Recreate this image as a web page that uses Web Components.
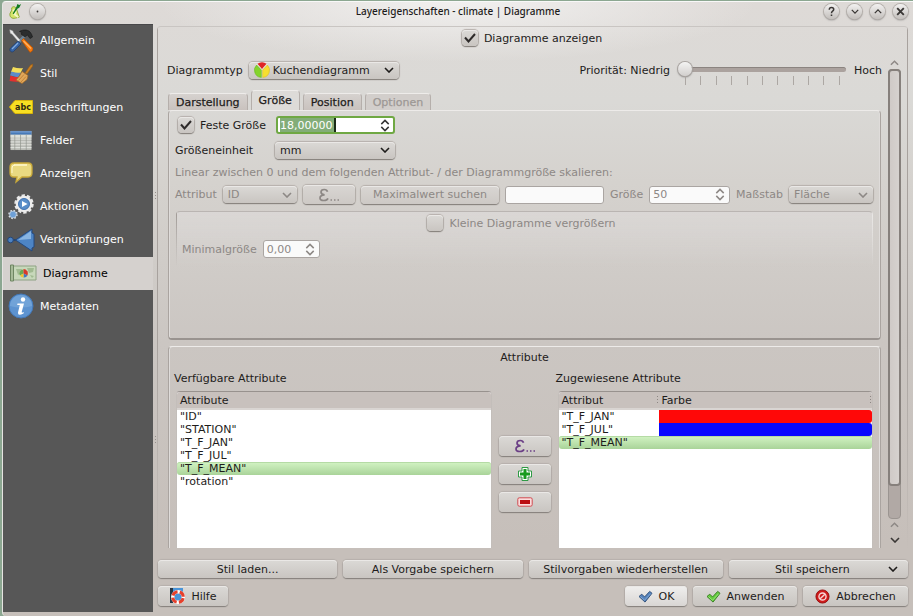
<!DOCTYPE html>
<html lang="de">
<head>
<meta charset="utf-8">
<title>Layereigenschaften - climate | Diagramme</title>
<style>
html, body { height: 100%; }
body {
  margin: 0;
  background: #8ca791;
  color: #1e1c1b;
  font: 11px/13px "DejaVu Sans", sans-serif;
  --dim: #8d8885;
}
</style>
</head>
<body>
<layer-dialog></layer-dialog>

<script>
const ICONS = {
  qgis: ['0 0 16 18', '<path d="M4 5c2-2 4-1 5 1l3 9-4 1c-4 1-6-1-6-4 0-2 2-3 2-5z" fill="#d5e56b" stroke="#8aa52f"/><path d="M5 8c3-1 4 1 2 4l4 3" fill="none" stroke="#f4f7c3" stroke-width="2"/><path d="M5 11L9 4l1-3 2 1 2-1-2 4-2 1-4 6z" fill="#137a22"/>'],
  tools: ['0 0 24 24', '<path d="M8 12.500L15.500 5l2 2-7.500 8z" fill="#6f8496"/><path d="M.8.800l3 1.200.6 1.800 6.600 7.200-1.500 1.500-6.500-7.500-1.600-.8z" fill="#ececec" stroke="#bbb" stroke-width=".5"/><path d="M10.500 2.500c3.500-2 8-2.200 10.500.5 1.500 1.500 2 3.500 2.500 5l-2.500 1.500-2.500-3.500-2.500 2-4-3 1-1.500z" fill="#2b2d2e" stroke="#151515" stroke-width=".6"/><path d="M12.500 11.500l2-2L24 19q.5 3-3 4.500z" fill="#f57a11" stroke="#b14f00" stroke-width=".7"/><path d="M14.500 12l7.500 7.500" stroke="#ffb164" stroke-width="1.200"/><path d="M9 12l3 3-7.500 7.500c-2 1.500-5-1-3-3.500z" fill="#3563a5" stroke="#1f3c6b" stroke-width=".7"/><path d="M9 14l-6 6" stroke="#84abdd" stroke-width="1.200"/>'],
  brush: ['0 0 24 24', '<path d="M4 5q6 2 10 1l-3 6-9-2z" fill="#f4de5a"/><path d="M2.500 9.500q5 2 9.500 1l-3 5-8-2z" fill="#5c8cc9"/><path d="M1.500 13.500q4 2 8 1.500l4 4q-6 1.500-13 0z" fill="#e3302f"/><path d="M16 11l5.500-8 2.500-1-.5 2.500L18 12z" fill="#c67e23" stroke="#935610" stroke-width=".5"/><path d="M13 9.500l6 4-1 4-5 4-6-3.500q4-4 6-8.500z" fill="#e0a75a" stroke="#a66a24" stroke-width=".7"/><path d="M9.500 18.500l5.500-6M12 20l5-5.500" stroke="#b9792f" stroke-width=".8"/>'],
  abc: ['0 0 24 14', '<path d="M.5 7L5 1.500l1-1h17.500v13H6l-1-1z" fill="#f7df22" stroke="#d9b40c"/><text x="14" y="10" text-anchor="middle" font-family="DejaVu Sans" font-weight="bold" font-size="8" fill="#2d2a12">abc</text>'],
  table: ['0 0 24 22', '<path d="M1 1h22v20H1z" fill="#b9bbb5"/><path d="M1 1h22v4H1z" fill="#477ab8"/><path d="M1 2h22" stroke="#86abd8"/><path d="M1 5h22v3H1z" fill="#dde0da"/><path d="M1 9.500h22M1 12.500h22M1 15.500h22M1 18.500h22" stroke="#e7e9e4"/><path d="M5.500 5v16M11.500 5v16M17.500 5v16" stroke="#8f938c" stroke-width=".7"/>'],
  bubble: ['0 0 24 24', '<path d="M5 2h14q4 0 4 4v6q0 4-4 4h-6l-6 5 1-5H5q-4 0-4-4V6q0-4 4-4z" fill="#e9d981" stroke="#c9a93a" stroke-width="1.300"/><path d="M5 4h13" stroke="#fff8cf" stroke-width="1.500"/><path d="M3 12V7q0-3 3-3" fill="none" stroke="#fff8cf"/>'],
  gears: ['0 0 26 26', '<circle cx="16" cy="10" r="8.200" fill="none" stroke="#e8e8e8" stroke-width="3" stroke-dasharray="3.200 1.952"/><circle cx="16" cy="10" r="7" fill="#6d9ed4" stroke="#ededed" stroke-width="2.600"/><circle cx="16" cy="10" r="5.500" fill="#5a8ec9" stroke="#3c6caa" stroke-width=".8"/><path d="M14 7l5.500 3L14 13z" fill="#fff"/><circle cx="5" cy="20.500" r="4" fill="none" stroke="#e0e4e8" stroke-width="1.500" stroke-dasharray="1.600 1.541"/><circle cx="5" cy="20.500" r="3.400" fill="#6ea0d7" stroke="#cfd9e4" stroke-width=".7"/>'],
  join: ['0 0 28 24', '<path d="M3 12h9" stroke="#1e3f70" stroke-width="1.500"/><circle cx="3.500" cy="12" r="2.800" fill="#4e83c1" stroke="#23477b"/><path d="M8.500 12L25 1v4l2 1v13l-2 1v3z" fill="#4d84c4" stroke="#25497e"/><path d="M11 12L24 3v8z" fill="#9cc4ec" opacity=".75"/>'],
  map: ['0 0 27 18', '<path d="M1 2h25v14H1z" fill="#c7d8ba" stroke="#8ea283"/><path d="M6 5h6l-1 4-3 2zM17 4h7l-1 4-4 1zM20 11l4 1-2 2z" fill="#a1ba91"/><path d="M.5 1h3v16h-3z" fill="#a7bb99" stroke="#6f8763"/><path d="M13.500 9.500V5.500a4 4 0 0 0-3.500 6z" fill="#6aab55"/><path d="M13.500 9.500V5a4.500 4.500 0 0 1 4 6.500z" fill="#d83a2a"/><path d="M13.500 9.500l4 2a4 4 0 0 1-4 2z" fill="#4278c0"/><path d="M13.500 9.500v4a4 4 0 0 1-3.500-2z" fill="#efc62f"/>'],
  info: ['0 0 26 26', '<circle cx="13" cy="13" r="12" fill="#5d93d0" stroke="#4478b6"/><path d="M2 13a11 11 0 0 1 22 0q-11 3-22 0z" fill="#7fadde" opacity=".6"/><circle cx="15" cy="6.500" r="2.200" fill="#fff"/><path d="M9.500 10.500h6.500l-2.300 8.500q0 1.200 2.300 0l-.5 1.500q-6 3-5.500-1l1.800-7.500H9.200z" fill="#fff"/>'],
  pie: ['0 0 16 16', '<circle cx="8" cy="8" r="7.700" fill="#e8e8df"/><path d="M8 7L3.500 1.800a7 7 0 0 1 9 0z" fill="#e02525"/><path d="M7.400 8v7.500A7.300 7.300 0 0 1 2.600 3z" fill="#84d32c" stroke="#5eaa17" stroke-width=".5"/><path d="M8.600 8v7.500A7.300 7.300 0 0 0 13.400 3z" fill="#f6df30" stroke="#cfae17" stroke-width=".5"/>'],
  down: ['0 0 10 6', '<path d="M1 1l4 4 4-4" fill="none" stroke="currentColor" stroke-width="1.600"/>'],
  up: ['0 0 10 6', '<path d="M1 5l4-4 4 4" fill="none" stroke="currentColor" stroke-width="1.600"/>'],
  spin: ['0 0 10 14', '<path d="M1 5.500l4-4 4 4M1 8.500l4 4 4-4" fill="none" stroke="currentColor" stroke-width="1.600"/>'],
  close: ['0 0 10 10', '<path d="M2 2l6 6M8 2L2 8" stroke="currentColor" stroke-width="1.700"/>'],
  help: ['0 0 10 10', '<path d="M3 3.300q0-2 2-2t2 1.700q0 1-1 1.700t-1 1.800M5 7.700v1.500" fill="none" stroke="currentColor" stroke-width="1.400"/>'],
  dot: ['0 0 10 10', '<circle cx="5" cy="5" r="1" fill="currentColor"/>'],
  epsilon: ['0 0 22 14', '<path d="M9.500 3.800Q9 1.500 6.300 1.500 3 1.500 3 4t3.600 2.800Q2 7 2 10q0 2.500 3.800 2.500 3.200 0 4.200-2.200" fill="none" stroke="currentColor" stroke-width="1.700"/><path d="M12.500 12h1.500M16 12h1.500M19.500 12h1.500" stroke="currentColor" stroke-width="1.500"/>'],
  plus: ['0 0 16 16', '<path d="M5 1.500h6V5h3.500v6H11v3.500H5V11H1.500V5H5z" fill="#fff" stroke="#2f9a45" stroke-linejoin="round"/><path d="M6.500 3h3v3.500H13v3H9.500V13h-3V9.500H3v-3h3.500z" fill="#189a1e"/>'],
  minus: ['0 0 16 10', '<rect x=".8" y=".8" width="14.400" height="8.400" rx="1.500" fill="#fbdcdc" stroke="#cf4a50"/><path d="M3 3h10v4H3z" fill="#bb0e12"/>'],
  buoy: ['0 0 16 16', '<path d="M1 0h13v14H1z" fill="#4a94d8"/><path d="M1 0h3v15H1z" fill="#283746"/><circle cx="9" cy="9" r="5.300" fill="#4a94d8" stroke="#fff" stroke-width="3.400"/><circle cx="9" cy="9" r="5.300" fill="none" stroke="#e6402c" stroke-width="3" stroke-dasharray="6 2.325" stroke-dashoffset="-1.200"/>'],
  okBlue: ['0 0 16 14', '<path d="M1 7l3-2.500 3 3L12.500 1.500l2.500 2L7.500 13z" fill="#5482bb" stroke="#2c4d78"/><path d="M2.500 7L7 11l6.500-7" fill="none" stroke="#92b5df" stroke-width=".8"/>'],
  okGreen: ['0 0 16 14', '<path d="M1 7l3-2.500 3 3L12.500 1.500l2.500 2L7.500 13z" fill="#62c93c" stroke="#347d1d"/><path d="M2.500 7L7 11l6.500-7" fill="none" stroke="#a9ed8c" stroke-width=".8"/>'],
  cancel: ['0 0 16 16', '<circle cx="8" cy="8" r="7" fill="#cf1b1b" stroke="#941010"/><circle cx="8" cy="8" r="3.800" fill="none" stroke="#f6d6d6" stroke-width="1.500"/><path d="M5.500 10.500l5-5" stroke="#f6d6d6" stroke-width="1.500"/>'],
  tick: ['0 0 12 10', '<path d="M1 4.500l3.500 4L11 1" fill="none" stroke="#2e2b2a" stroke-width="2"/>']
};

const BASE = `
  *, *::before, *::after { box-sizing: border-box; }
  :host { box-sizing: border-box; }
  button, input, select { font: inherit; color: inherit; margin: 0; }
  button, select { appearance: none; }
`;
const RAISED = `
  border: 0; border-radius: 4px;
  background: linear-gradient(#dbd9d6, #c9c5c1);
  box-shadow: 0 1px 1px #85807c, 0 0 1px 1px #b6b0ac, inset 0 1px 0 #eae8e6;
`;

function define(name, render) {
  customElements.define(name, class extends HTMLElement {
    connectedCallback() {
      if (this.shadowRoot) return;
      const root = this.attachShadow({ mode: 'open' });
      const t = document.createElement('template');
      t.innerHTML = render(this);
      root.append(t.content.cloneNode(true));
    }
  });
}

/* <ui-icon name w h> */
define('ui-icon', el => {
  const [box, body] = ICONS[el.getAttribute('name')];
  return `<style>${BASE}
    :host { display: block; flex: none; width: ${el.getAttribute('w') || 16}px; height: ${el.getAttribute('h') || 16}px; }
    svg { display: block; width: 100%; height: 100%; }
  </style><svg viewBox="${box}" aria-hidden="true">${body}</svg>`;
});

/* <ui-button icon w h menu disabled label> */
define('ui-button', el => {
  const a = n => el.getAttribute(n);
  return `<style>${BASE}
    :host { display: block; }
    button { ${RAISED} width: 100%; height: 100%; min-height: 18px; padding: 0 10px;
      display: flex; align-items: center; justify-content: center; gap: 6px; white-space: nowrap; }
    button:disabled { color: var(--dim); background: linear-gradient(#d9d6d3, #cdc9c5); }
    :host([bright]) button { background: linear-gradient(#f0efee, #d9d6d4); }
    .text { flex: 0 1 auto; }
    :host([menu]) .text { flex: 1; }
    :host([menu]) button { padding-left: 14px; }
    :host([purple]) ui-icon { color: #6b3f86; }
  </style>
  <button type="button" ${el.hasAttribute('disabled') ? 'disabled' : ''} ${a('label') ? `aria-label="${a('label')}"` : ''}>
    ${a('icon') ? `<ui-icon name="${a('icon')}" w="${a('w') || 16}" h="${a('h') || 16}"></ui-icon>` : ''}
    ${a('label') ? '' : '<span class="text"><slot></slot></span>'}
    ${el.hasAttribute('menu') ? '<ui-icon name="down" w="10" h="6"></ui-icon>' : ''}
  </button>`;
});

/* <ui-combo label value icon disabled> */
define('ui-combo', el => {
  const off = el.hasAttribute('disabled'), a = n => el.getAttribute(n);
  return `<style>${BASE}
    :host { display: flex; align-items: center; gap: 6px; color: ${off ? 'var(--dim)' : 'inherit'}; }
    label { flex: none; width: var(--label, auto); }
    .box { ${RAISED} flex: 1; min-width: 0; display: flex; align-items: center; height: 17px; padding: 0 5px; }
    select { flex: 1; min-width: 0; border: 0; background: none; padding: 0; height: 16px; opacity: 1; outline: 0; }
    select { padding-left: ${a('icon') ? 3 : 0}px; }
    .chev { pointer-events: none; }
  </style>
  <label for="s">${a('label')}</label>
  <span class="box">${a('icon') ? `<ui-icon name="${a('icon')}" w="16" h="16"></ui-icon>` : ''}
    <select id="s" ${off ? 'disabled' : ''}><option>${a('value')}</option></select>
    <ui-icon class="chev" name="down" w="10" h="6"></ui-icon></span>`;
});

/* <ui-spin label value focused disabled> */
define('ui-spin', el => {
  const off = el.hasAttribute('disabled'), a = n => el.getAttribute(n), f = el.hasAttribute('focused');
  return `<style>${BASE}
    :host { display: flex; align-items: center; gap: 6px; color: ${off ? 'var(--dim)' : 'inherit'}; }
    .box { flex: 1; min-width: 0; display: flex; align-items: center; height: 18px; padding: 0 4px 0 3px;
      background: ${off ? '#fafafa' : '#fff'}; border-radius: 3px; border: ${f ? '2px solid #6fa843' : '1px solid #aaa5a2'};
      ${f ? 'padding: 0 3px 0 2px;' : ''} }
    input { flex: 1; min-width: 0; width: 0; border: 0; padding: 0; background: none; outline: 0; height: 14px; }
    .sel { flex: none; background: #83ad78; color: #fff; border-right: 2px solid #1b2b18; }
    ui-icon { color: ${off ? '#8d8885' : '#333'}; }
    input.sel { width: 56px; flex: none; }
    .gap { flex: 1; }
  </style>
  ${a('label') ? `<label for="i">${a('label')}</label>` : ''}
  <span class="box"><input id="i" class="${f ? 'sel' : ''}" type="text" inputmode="decimal" value="${a('value')}" ${off ? 'disabled' : ''} ${a('name') ? `aria-label="${a('name')}"` : ''}>
  ${f ? '<span class="gap"></span>' : ''}<ui-icon name="spin" w="10" h="13"></ui-icon></span>`;
});

/* <ui-check checked disabled>text</ui-check> */
define('ui-check', el => `<style>${BASE}
    :host { display: block; }
    label { display: flex; align-items: center; gap: 6px; color: ${el.hasAttribute('disabled') ? 'var(--dim)' : 'inherit'}; }
    .mark { ${RAISED} display: grid; width: 16px; height: 16px; place-items: center; }
    .mark > * { grid-area: 1 / 1; }
    input { appearance: none; width: 16px; height: 16px; }
    ui-icon { visibility: hidden; pointer-events: none; }
    input:checked + ui-icon { visibility: visible; }
  </style>
  <label><span class="mark"><input type="checkbox" ${el.hasAttribute('checked') ? 'checked' : ''} ${el.hasAttribute('disabled') ? 'disabled' : ''}><ui-icon name="tick" w="12" h="10"></ui-icon></span><slot></slot></label>`);

/* title bar */
define('title-bar', () => {
  const b = (n, l, w, h) => `<button type="button" aria-label="${l}"><ui-icon name="${n}" w="${w}" h="${h}"></ui-icon></button>`;
  return `<style>${BASE}
    :host { display: grid; grid-template-columns: 1fr auto 1fr; align-items: center; height: 22px; padding: 0 5px 3px; }
    .l, .r { display: flex; align-items: center; }
    .l { gap: 7px; } .r { gap: 8px; justify-content: flex-end; }
    h1 { margin: 0; font: 500 10px/13px "Noto Sans", sans-serif; }
    button { width: 15px; height: 15px; padding: 0; border: 0; border-radius: 50%; display: grid; place-items: center;
      background: linear-gradient(#f2f1f0, #c3bfbc); box-shadow: 0 0 0 1px #b5b0ac, 0 1px 2px #777; color: #3a3735; }
  </style>
  <span class="l"><ui-icon name="qgis" w="15" h="17"></ui-icon>${b('dot', 'Fenstermenü', 9, 9)}</span>
  <h1><slot></slot></h1>
  <span class="r">${b('help', 'Hilfe', 11, 11)}${b('down', 'Minimieren', 8, 5)}${b('up', 'Maximieren', 8, 5)}${b('close', 'Schließen', 11, 11)}</span>`;
});

/* sidebar */
define('nav-item', el => `<style>${BASE}
    :host { display: block; }
    a { display: flex; align-items: center; height: 100%; gap: 5px; padding-left: 3px; color: #fff; text-decoration: none; }
    .ico { width: 29px; display: grid; place-items: center; }
    :host([current]) a { background: #d5d1ce; color: #000; padding-left: 6px; }
  </style>
  <a href="#" ${el.hasAttribute('current') ? 'aria-current="page"' : ''}><span class="ico"><ui-icon name="${el.getAttribute('icon')}" w="${el.getAttribute('w') || 24}" h="${el.getAttribute('h') || 24}"></ui-icon></span><slot></slot></a>`);
define('side-nav', () => `<style>${BASE}
    :host { display: block; background: #575757; box-shadow: inset 0 1px 0 #48484a; }
    nav { display: grid; grid-auto-rows: 1fr; min-height: 299px; }
  </style><nav><slot></slot></nav>`);

define('split-handle', () => `<style>${BASE}
    :host { display: flex; flex-direction: column; align-items: center; justify-content: space-between; padding: 168px 0; }
    i { width: 1px; height: 8px; background: repeating-linear-gradient(#96908c 0 1px, transparent 1px 3px); }
  </style><i></i><i></i>`);

/* priority slider */
define('priority-slider', () => `<style>${BASE}
    :host { display: flex; align-items: center; gap: 8px; }
    .track { width: 168px; padding-top: 7px; }
    input { appearance: none; display: block; width: 100%; height: 14px; background: none; }
    input::-webkit-slider-runnable-track { height: 5px; border-radius: 3px; background: #aba29e; border-top: 1px solid #8b8480; }
    input::-webkit-slider-thumb { appearance: none; width: 14px; height: 14px; margin-top: -6px; border-radius: 50%;
      background: linear-gradient(#f4f4f3, #d2cfcd); box-shadow: 0 0 0 1px #aaa5a1, 0 1px 2px #666; }
    .ticks { display: flex; justify-content: space-between; padding: 0 6px 0 7px; height: 9px; }
    .ticks i { width: 1px; background: #aca7a3; }
  </style>
  <label for="p">Priorität: Niedrig</label>
  <span class="track"><input id="p" type="range" min="0" max="10" value="0"><span class="ticks">${'<i></i>'.repeat(11)}</span></span>
  <span>Hoch</span>`);

/* tabs */
define('tab-strip', el => `<style>${BASE}
    :host { display: flex; align-items: flex-end; gap: 3px; height: 20px; }
    button { height: 17px; padding: 0 7px; border: 1px solid #b5afab; border-top-color: #eeecea; border-bottom: 0; border-radius: 4px 4px 0 0;
      background: linear-gradient(#d6d2cf, #c9c2be); -webkit-text-stroke: .25px; }
    button[aria-selected=true] { height: 20px; background: #dddbd8; border-color: #eeecea #b5afab; }
    button:disabled { color: #9d9895; background: #d2cecb; }
  </style>${el.getAttribute('tabs').split(',').map((t, i) =>
    `<button type="button" role="tab" aria-selected="${i === 1}" ${i === 3 ? 'disabled' : ''}>${t}</button>`).join('')}`);

/* framed group */
define('group-frame', () => `<style>${BASE}
    :host { display: block; border: 1px solid #aaa4a0; border-top-color: #edebe9; border-radius: 4px; box-shadow: inset 1px 0 0 #dfdcda, inset -1px 0 0 #dfdcda; }
    :host([closed]) { border-bottom: 2px solid #99938f; }
    :host([fading]) { border-color: transparent; border-top-color: #bab5b2; box-shadow: none;
      background: linear-gradient(#9e9894, transparent) left / 1px 100% no-repeat, linear-gradient(#e9e7e5, transparent) right / 1px 100% no-repeat, linear-gradient(#dad7d5, transparent); background-origin: border-box; }
  </style><slot></slot>`);

/* size tab */
define('size-panel', () => `<style>${BASE}
    :host { display: block; padding: 4px 7px 5px 6px; min-height: 227px; }
    .row { display: flex; align-items: center; gap: 6px; }
    .fix { height: 20px; }
    .fix ui-check { width: 91px; padding-left: 3px; white-space: nowrap; }
    .fix ui-spin { width: 119px; margin-left: 4px; }
    .unit { width: 220px; margin-top: 5px; height: 20px; --label: 94px; }
    p { margin: 6px 0 6px; color: var(--dim); height: 13px; }
    .eps { width: 52px; height: 19px; }
    .max { flex: 141 1 0; }
    .id { width: 122px; }
    input { flex: 95 1 0; min-width: 0; height: 18px; border: 1px solid #aaa5a2; border-radius: 3px; background: #fafafa; }
    .size { width: 120px; } .scale { width: 137px; }
    group-frame { margin-top: 7px; margin-left: 1px; height: 56px; padding: 3px 5px; }
    group-frame ui-check { width: max-content; margin: 0 auto; padding-right: 6px; }
    .min { width: 138px; margin-top: 9px; }
  </style>
  <div class="row fix"><ui-check checked>Feste Größe</ui-check><ui-spin class="s" name="Feste Größe" value="18,00000" focused></ui-spin></div>
  <ui-combo class="unit" label="Größeneinheit" value="mm"></ui-combo>
  <p>Linear zwischen 0 und dem folgenden Attribut- / der Diagrammgröße skalieren:</p>
  <div class="row">
    <ui-combo class="id" label="Attribut" value="ID" disabled></ui-combo>
    <ui-button class="eps" icon="epsilon" w="22" h="14" label="Ausdruck" disabled></ui-button>
    <ui-button class="max" disabled>Maximalwert suchen</ui-button>
    <input type="text" aria-label="Maximalwert" disabled>
    <ui-spin class="size" label="Größe" value="50" disabled></ui-spin>
    <ui-combo class="scale" label="Maßstab" value="Fläche" disabled></ui-combo>
  </div>
  <group-frame fading>
    <ui-check disabled>Kleine Diagramme vergrößern</ui-check>
    <ui-spin class="min" label="Minimalgröße" value="0,00" disabled></ui-spin>
  </group-frame>`);

/* attribute table: heads="A,B" rows="x|colour,…" current="n" */
define('attribute-table', el => {
  const heads = el.getAttribute('heads').split(',');
  const cur = +el.getAttribute('current');
  const two = heads.length > 1;
  const rows = el.getAttribute('rows').split(',').map((r, i) => {
    const [n, c] = r.split('|');
    return `<tr class="${i === cur ? 'cur' : ''}"><td>"${n}"</td>${two ? `<td>${c ? `<span style="background:${c}"></span>` : ''}</td>` : ''}</tr>`;
  }).join('');
  return `<style>${BASE}
    :host { display: block; background: #fff; border: 1px solid #a39d99; border-color: #98928e #c3beba; border-radius: 4px 4px 0 0; overflow: hidden; }
    table { width: 100%; border-collapse: collapse; table-layout: fixed; }
    th { height: 17px; padding: 0 3px; text-align: left; font-weight: 400; background: #c8c1bd; border-bottom: 2px solid #d9d5d2; }
    th:first-child { width: ${two ? '100px' : 'auto'}; }
    ${two ? 'th { background: repeating-linear-gradient(#8d8783 0 1px, transparent 1px 3px) right 1px center / 1px 8px no-repeat, #c8c1bd; }' : ''}
    td { height: 13px; padding: 0 0 0 3px; line-height: 13px; }
    td + td { padding: 0; }
    td span { display: block; height: 13px; border-radius: 0 3px 3px 0; }
    .cur td { background: linear-gradient(#d3f4c4, #a9d399); box-shadow: inset 0 1px 0 #b5dba5; }
    .cur td:first-child { border-radius: 3px 0 0 3px; } .cur td:last-child { border-radius: 0 3px 3px 0; }
    .cur td:only-child { border-radius: 3px; }
  </style>
  <table><thead><tr>${heads.map(h => `<th>${h}</th>`).join('')}</tr></thead><tbody>${rows}</tbody></table>`;
});

define('attribute-picker', () => `<style>${BASE}
    :host { display: block; padding: 4px 7px 0; }
    h2 { margin: 0 0 8px; font: inherit; text-align: center; }
    .cols { display: grid; grid-template-columns: 1fr 52px 1fr; gap: 0 7px; }
    h3 { margin: 0 0 6px -2px; font: inherit; }
    attribute-table { height: 240px; }
    .mid { display: grid; gap: 8px; align-content: start; padding-top: 64px; }
    .mid ui-button { height: 20px; }
  </style>
  <h2>Attribute</h2>
  <div class="cols">
    <section><h3>Verfügbare Attribute</h3><attribute-table heads="Attribute" rows="ID,STATION,T_F_JAN,T_F_JUL,T_F_MEAN,rotation" current="4"></attribute-table></section>
    <div class="mid">
      <ui-button icon="epsilon" w="22" h="14" label="Ausdruck" purple></ui-button>
      <ui-button icon="plus" label="Hinzufügen"></ui-button>
      <ui-button icon="minus" w="16" h="10" label="Entfernen"></ui-button>
    </div>
    <section><h3>Zugewiesene Attribute</h3><attribute-table heads="Attribut,Farbe" rows="T_F_JAN|#ff0808,T_F_JUL|#0808ff,T_F_MEAN" current="2"></attribute-table></section>
  </div>`);

define('scroll-rail', () => `<style>${BASE}
    :host { display: flex; flex-direction: column; align-items: center; width: 15px; }
    button { border: 0; background: none; padding: 0; width: 15px; height: 12px; display: grid; place-items: center; color: #3a3735; }
    .dim { color: #8d8885; }
    .rail { flex: 1; width: 13px; border-radius: 4px; background: #b1a9a5; border: 1px solid #9b9591; display: flex; flex-direction: column; }
    .thumb { flex: 0 0 93%; margin: -1px; border: 2px solid #86807c; border-radius: 4px; background: linear-gradient(90deg, #cfcac7, #d6d2cf); }
    button:last-child { height: 17px; }
  </style>
  <button type="button" class="dim" aria-label="Nach oben"><ui-icon name="up" w="9" h="6"></ui-icon></button>
  <div class="rail"><div class="thumb"></div></div>
  <button type="button" class="dim" aria-label="Zurück"><ui-icon name="up" w="9" h="6"></ui-icon></button>
  <button type="button" aria-label="Nach unten"><ui-icon name="down" w="10" h="6"></ui-icon></button>`);

define('diagram-page', () => `<style>${BASE}
    :host { display: flex; flex-direction: column; min-height: 0; padding: 3px 6px 4px 9px; border-radius: 4px;
      background: linear-gradient(#a8a29e 60%, transparent) left / 1px 100% no-repeat, linear-gradient(#a8a29e 60%, transparent) right / 1px 100% no-repeat;
      border-top: 1px solid #c9c5c2; }
    .show { align-self: center; padding-right: 4px; }
    .area { flex: 1; min-height: 0; display: grid; grid-template-columns: 1fr 15px; gap: 5px; margin-top: 11px; }
    .view { min-height: 0; overflow: hidden; display: flex; flex-direction: column; padding: 0 1px 0 2px; }
    .view > * { flex: none; }
    .type { display: flex; justify-content: space-between; align-items: center; height: 30px; margin: -2px -1px 0 -1px; }
    .type ui-combo { width: 232px; }
    tab-strip { margin: 5px 0 0; }
    group-frame + group-frame { margin-top: 6px; }
  </style>
  <ui-check class="show" checked>Diagramme anzeigen</ui-check>
  <div class="area">
    <div class="view">
      <div class="type"><ui-combo label="Diagrammtyp" value="Kuchendiagramm" icon="pie"></ui-combo><priority-slider></priority-slider></div>
      <tab-strip tabs="Darstellung,Größe,Position,Optionen" role="tablist"></tab-strip>
      <group-frame closed><size-panel></size-panel></group-frame>
      <group-frame><attribute-picker></attribute-picker></group-frame>
    </div>
    <scroll-rail></scroll-rail>
  </div>`);

define('layer-dialog', () => `<style>${BASE}
    :host { display: block; height: 100vh; padding: 1px 0 0 2px; }
    .win { height: 100%; display: flex; flex-direction: column; border-radius: 4px 0 0 4px; border-top: 1px solid #f8f8f8; border-left: 1px solid #e6e4e2;
      background: radial-gradient(300px 60px at 50% 0, #f1f0ef, transparent), linear-gradient(#dedad7, #dad9d6 100px, #d5d2ce 180px, #cbc6c2 340px, #c6bfba 540px); }
    .body { flex: 1; min-height: 0; display: grid; grid-template-columns: 150px 4px 1fr; padding: 0 5px 4px 0; }
    main { display: flex; flex-direction: column; min-height: 0; min-width: 0; padding: 2px 0 6px; }
    diagram-page { flex: 1; }
    .styles { display: grid; grid-template-columns: 12fr 12fr 13fr 12fr; gap: 6px; margin-top: 8px; padding-left: 1px; }
    .actions { display: flex; gap: 6px; margin-top: 8px; padding-left: 1px; }
    .actions ui-button { height: 20px; }
    .help { width: 70px; margin-right: auto; } .ok { width: 62px; } .apply { width: 104px; } .cancel { width: 105px; }
  </style>
  <div class="win">
    <title-bar>Layereigenschaften - climate | Diagramme</title-bar>
    <div class="body">
      <side-nav>
        <nav-item icon="tools">Allgemein</nav-item>
        <nav-item icon="brush">Stil</nav-item>
        <nav-item icon="abc" w="24" h="14">Beschriftungen</nav-item>
        <nav-item icon="table" w="24" h="21">Felder</nav-item>
        <nav-item icon="bubble">Anzeigen</nav-item>
        <nav-item icon="gears" w="26" h="26">Aktionen</nav-item>
        <nav-item icon="join" w="28" h="24">Verknüpfungen</nav-item>
        <nav-item icon="map" w="27" h="18" current>Diagramme</nav-item>
        <nav-item icon="info" w="26" h="26">Metadaten</nav-item>
      </side-nav>
      <split-handle></split-handle>
      <main>
        <diagram-page></diagram-page>
        <div class="styles">
          <ui-button>Stil laden...</ui-button><ui-button>Als Vorgabe speichern</ui-button>
          <ui-button>Stilvorgaben wiederherstellen</ui-button><ui-button menu>Stil speichern</ui-button>
        </div>
        <div class="actions">
          <ui-button class="help" icon="buoy">Hilfe</ui-button>
          <ui-button class="ok" icon="okBlue" w="15" h="13" bright>OK</ui-button>
          <ui-button class="apply" icon="okGreen" w="15" h="13">Anwenden</ui-button>
          <ui-button class="cancel" icon="cancel" w="15" h="15">Abbrechen</ui-button>
        </div>
      </main>
    </div>
  </div>`);
</script>
</body>
</html>
